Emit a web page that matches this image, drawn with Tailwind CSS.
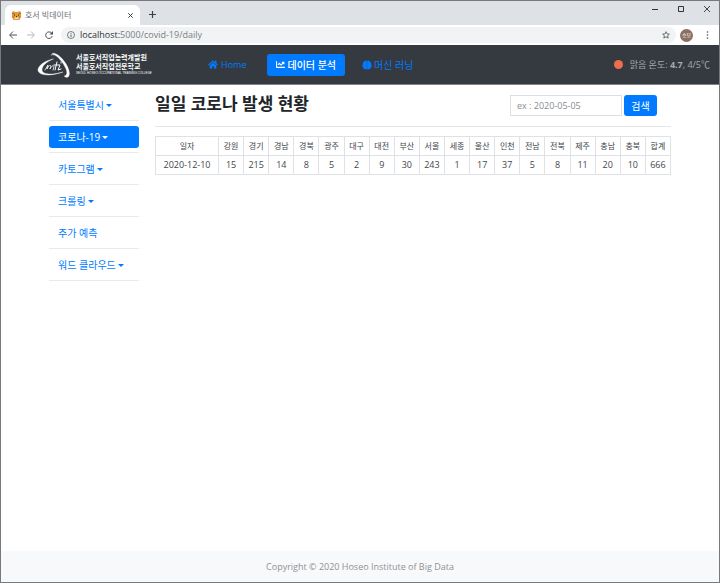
<!DOCTYPE html>
<html lang="ko">
<head>
<meta charset="utf-8">
<meta name="viewport" content="width=device-width, initial-scale=1">
<title>호서 빅데이터</title>
<script src="https://cdn.jsdelivr.net/npm/@tailwindcss/browser@4"></script>
</head>
<body class="flex min-h-screen flex-col border border-[#77797d] bg-white font-['Open_Sans','Noto_Sans_CJK_KR',sans-serif] text-[9px] leading-3 text-[#212529]">

<!-- Browser chrome -->
<div class="flex h-6 bg-[#dee1e6]">
  <div class="mt-1 ml-1 flex w-[135px] items-center rounded-t-md bg-white pr-1 pl-[7px]">
    <svg class="h-[9px] w-[9px]" viewBox="0 0 9 9" aria-hidden="true"><path d="M0 1l2-1 1 1h3l1-1 2 1v4L7.500 9h-6L0 6z" fill="#e39a35"/><path d="M0 2.500h2M7 2.500h2M0 6h2M7 6h2" stroke="#8f622f" stroke-width=".7"/><path d="M2 4h1M6 4h1M4 5.500h1" stroke="#292d31"/><path d="M2.500 6.500h4v1.500h-4z" fill="#eee2cc"/></svg>
    <span class="ml-1 flex-1 text-[8px] text-[#6d7175]">호서 빅데이터</span>
    <button aria-label="탭 닫기" class="flex h-3 w-3 items-center justify-center"><svg class="h-[5px] w-[5px]" viewBox="0 0 5 5" stroke="#3c4043"><path d="M.3.3l4.400 4.400M4.700.3L.3 4.700"/></svg></button>
  </div>
  <button aria-label="새 탭" class="mt-1 ml-2 flex h-[18px] w-2 items-center justify-center"><svg class="h-[7px] w-[7px]" viewBox="0 0 7 7" stroke="#3c4043"><path d="M3.500 0v7M0 3.500h7" stroke-width="1.200"/></svg></button>
  <div class="ml-auto flex h-4 items-center gap-5 pr-[9px]">
    <button aria-label="최소화"><svg class="h-[6px] w-[6px]" viewBox="0 0 6 6" stroke="#333"><path d="M0 3.500h6"/></svg></button>
    <button aria-label="최대화"><svg class="h-[6px] w-[6px]" viewBox="0 0 6 6" fill="none" stroke="#333"><path d="M.5.5h5v5h-5z"/></svg></button>
    <button aria-label="닫기"><svg class="h-[6px] w-[6px]" viewBox="0 0 6 6" stroke="#333"><path d="M0 0l6 6M6 0L0 6" stroke-width=".9"/></svg></button>
  </div>
</div>
<div class="flex h-5 items-center bg-white pr-[9px] pl-2">
  <button aria-label="뒤로"><svg class="h-2 w-2" viewBox="0 0 8 8" fill="none" stroke="#4b4f54"><path d="M8 4H1M4 .5L.6 4 4 7.500"/></svg></button>
  <button aria-label="앞으로" class="ml-[10px]"><svg class="h-2 w-2" viewBox="0 0 8 8" fill="none" stroke="#b5b7ba"><path d="M0 4h7M4 .5L7.400 4 4 7.500"/></svg></button>
  <button aria-label="새로고침" class="ml-[10px]"><svg class="h-2 w-2" viewBox="0 0 8 8"><path d="M6.700 2.300A3.300 3.300 0 1 0 7.200 5" fill="none" stroke="#4b4f54"/><path d="M8 0v3.500H4.500z" fill="#4b4f54"/></svg></button>
  <div class="ml-2 flex h-4 flex-1 items-center rounded-full bg-[#f1f3f4] px-[6px]">
    <svg class="mr-[5px] h-2 w-2" viewBox="0 0 8 8" fill="none" stroke="#5f6368"><circle cx="4" cy="4" r="3.500" stroke-width=".8"/><path d="M4 3.500V6M4 2v.8"/></svg>
    <span class="text-[#7a7e83]"><span class="text-[#303236]">localhost:</span>5000/covid-19/daily</span>
    <button aria-label="북마크" class="ml-auto"><svg class="h-2 w-2" viewBox="0 0 8 8" fill="none" stroke="#4b4f54" stroke-width=".8"><path d="M4 .7l1 2.200 2.400.2-1.800 1.600.6 2.400L4 5.800 1.800 7.100l.6-2.400L.6 3.100 3 2.900z"/></svg></button>
  </div>
  <button aria-label="프로필" class="mx-1 h-[13px] w-[13px] rounded-full bg-[#8d6e63] text-center text-[5px] leading-3 text-white">승모</button>
  <button aria-label="메뉴" class="ml-2"><svg class="h-2 w-[5px]" viewBox="0 0 5 8" fill="#4b4f54"><circle cx="2.500" cy="1" r=".8"/><circle cx="2.500" cy="4" r=".8"/><circle cx="2.500" cy="7" r=".8"/></svg></button>
</div>

<!-- Site header -->
<header class="flex h-10 items-center border-b border-[#808388] bg-[#343a40] pr-[9px] pl-9 text-[#007bff]">
  <a href="#" aria-label="서울호서직업능력개발원" class="flex w-[108px] items-center text-white">
    <svg class="mr-[5px] h-[26px] w-[34px] shrink-0" viewBox="0 0 34 26" fill="none" stroke="#fff" stroke-linecap="round"><path d="M14.500 3C15-1 22 2 27 9c5 6 7 14 4 16-1 1-3 0-4-1 3 0 4-4 1-9-4-8-11-14-13.500-12z" fill="#fff" stroke-width=".3"/><path d="M16 7C7 9 1 14 1 18c0 5 11 7 25 2-10 3-21 3-21-2 0-4 4-8 11-11z" fill="#fff" stroke-width=".4"/><path d="M8 18l3-5-1 4c2-4 3-4 4-3l-1 3c2-4 4-4 4-2l-1 3" stroke-width=".8"/><path d="M20 10l-2 8M17 13h6l-2 5 3-1M24 10v1" stroke-width="1"/></svg>
    <span class="flex flex-col whitespace-nowrap">
      <span class="text-[7px] leading-[9px] font-bold">서울호서직업능력개발원</span>
      <span class="text-[7px] leading-[9px] font-bold">서울호서직업전문학교</span>
      <span class="font-['Liberation_Sans',sans-serif] text-[3px] leading-[5px]">SEOUL HOSEO OCCUPATIONAL TRAINING COLLEGE</span>
    </span>
  </a>
  <nav class="ml-[54px] flex items-center text-[10px]">
    <a href="#" class="flex h-[22px] items-center gap-[3px] rounded-[3px] px-[9px] text-[9px]">
      <svg class="h-[9px] w-[10px]" viewBox="0 0 576 512" fill="currentColor" aria-hidden="true"><path d="M280 148L96 300v164c0 9 7 16 16 16h112c9 0 16-7 16-16v-96c0-9 7-16 16-16h64c9 0 16 7 16 16v96c0 9 7 16 16 16h112c9 0 16-7 16-16V300L296 148c-5-4-11-4-16 0zM572 251l-84-69V44c0-7-5-12-12-12h-56c-7 0-12 5-12 12v73l-90-74c-18-15-43-15-61 0L4 251c-5 4-5 12-1 17l25 31c5 5 12 6 17 2l235-194c5-4 11-4 16 0l235 194c5 4 13 3 17-2l25-31c5-5 4-13-1-17z"/></svg>Home</a>
    <a href="#" aria-current="page" class="ml-3 flex h-[22px] items-center gap-[2px] rounded-[3px] bg-[#007bff] px-[9px] font-medium text-white">
      <svg class="h-[9px] w-[9px]" viewBox="0 0 512 512" fill="currentColor" aria-hidden="true"><path d="M496 384H64V80c0-9-7-16-16-16H16C7 64 0 71 0 80v336c0 18 14 32 32 32h464c9 0 16-7 16-16v-32c0-9-7-16-16-16zM464 96H346c-22 0-32 26-17 41l32 32-73 73-73-73c-13-13-33-13-46 0l-68 68c-6 6-6 16 0 23l23 23c6 6 16 6 22 0l46-46 73 73c13 13 33 13 46 0l96-96 32 32c15 15 41 5 41-17V112c0-9-7-16-16-16z"/></svg>데이터 분석</a>
    <a href="#" class="ml-2 flex h-[22px] items-center gap-[2px] rounded-[3px] px-[9px]">
      <svg class="h-[10px] w-[10px]" viewBox="0 0 20 20" aria-hidden="true"><path d="M9.700 2C8 0 5 1 5 3 2 3 1 6 2 8c-2 2-2 5 0 6 0 3 2 4 4 4 1 2 3 1 3.700 0zM10.300 2C12 0 15 1 15 3c3 0 4 3 3 5 2 2 2 5 0 6 0 3-2 4-4 4-1 2-3 1-3.700 0z" fill="currentColor"/></svg>머신 러닝</a>
  </nav>
  <div class="ml-auto flex items-center text-[#a6a9ad]">
    <span class="mr-[7px] h-[9px] w-[9px] rounded-full bg-[#ec6e4c]"></span>
    <span>맑음 온도: <b>4.7</b>, 4/5℃</span>
  </div>
</header>

<div class="flex flex-1 items-start gap-4 px-12 pt-1">
  <nav aria-label="사이드 메뉴" class="w-[90px] shrink-0 text-[10px] text-[#007bff]">
    <ul class="[&>li]:border-b [&>li]:border-[#e9eaec] [&>li]:pt-[5px] [&>li]:pb-1">
      <li><a href="#" class="flex h-[22px] items-center gap-[2px] rounded-[3px] px-[9px]">서울특별시<svg class="h-[3px] w-[6px]" viewBox="0 0 6 3" fill="currentColor"><path d="M0 0h6L3 3z"/></svg></a></li>
      <li><a href="#" aria-current="page" class="flex h-[22px] items-center gap-[2px] rounded-[3px] bg-[#007bff] px-[9px] text-white">코로나-19<svg class="h-[3px] w-[6px]" viewBox="0 0 6 3" fill="currentColor"><path d="M0 0h6L3 3z"/></svg></a></li>
      <li><a href="#" class="flex h-[22px] items-center gap-[2px] rounded-[3px] px-[9px]">카토그램<svg class="h-[3px] w-[6px]" viewBox="0 0 6 3" fill="currentColor"><path d="M0 0h6L3 3z"/></svg></a></li>
      <li><a href="#" class="flex h-[22px] items-center gap-[2px] rounded-[3px] px-[9px]">크롤링<svg class="h-[3px] w-[6px]" viewBox="0 0 6 3" fill="currentColor"><path d="M0 0h6L3 3z"/></svg></a></li>
      <li><a href="#" class="flex h-[22px] items-center rounded-[3px] px-[9px]">주가 예측</a></li>
      <li><a href="#" class="flex h-[22px] items-center gap-[2px] rounded-[3px] px-[9px]">워드 클라우드<svg class="h-[3px] w-[6px]" viewBox="0 0 6 3" fill="currentColor"><path d="M0 0h6L3 3z"/></svg></a></li>
    </ul>
  </nav>
  <main class="min-w-0 flex-1">
    <div class="flex h-[38px] items-start justify-between border-b border-[#e5e5e5] pt-[6px]">
      <h1 class="text-[17px] leading-[18px] font-bold">일일 코로나 발생 현황</h1>
      <form class="mr-[14px] flex gap-[2px]">
        <input type="text" aria-label="날짜" placeholder="ex : 2020-05-05" class="h-[21px] w-28 border border-[#dcdfe3] px-[6px] placeholder:text-[#868c92]">
        <button type="button" class="h-[21px] w-[33px] rounded-[3px] bg-[#007bff] text-center text-[10px] text-white">검색</button>
      </form>
    </div>
    <table class="mt-[9px] w-full table-fixed border-collapse text-center text-[#42474c] [&_td]:h-[19px] [&_td]:border [&_td]:border-[#dee2e6] [&_th]:h-[19px] [&_th]:border [&_th]:border-[#dee2e6] [&_th]:text-[8px] [&_th]:font-normal">
      <colgroup><col class="w-[63px]"><col span="18"></colgroup>
      <thead><tr><th>일자</th><th>강원</th><th>경기</th><th>경남</th><th>경북</th><th>광주</th><th>대구</th><th>대전</th><th>부산</th><th>서울</th><th>세종</th><th>울산</th><th>인천</th><th>전남</th><th>전북</th><th>제주</th><th>충남</th><th>충북</th><th>합계</th></tr></thead>
      <tbody><tr><td>2020-12-10</td><td>15</td><td>215</td><td>14</td><td>8</td><td>5</td><td>2</td><td>9</td><td>30</td><td>243</td><td>1</td><td>17</td><td>37</td><td>5</td><td>8</td><td>11</td><td>20</td><td>10</td><td>666</td></tr></tbody>
    </table>
  </main>
</div>

<footer class="flex h-[31px] items-center justify-center bg-[#f8f9fa] text-[#8e9297]">Copyright © 2020 Hoseo Institute of Big Data</footer>
</body>
</html>
